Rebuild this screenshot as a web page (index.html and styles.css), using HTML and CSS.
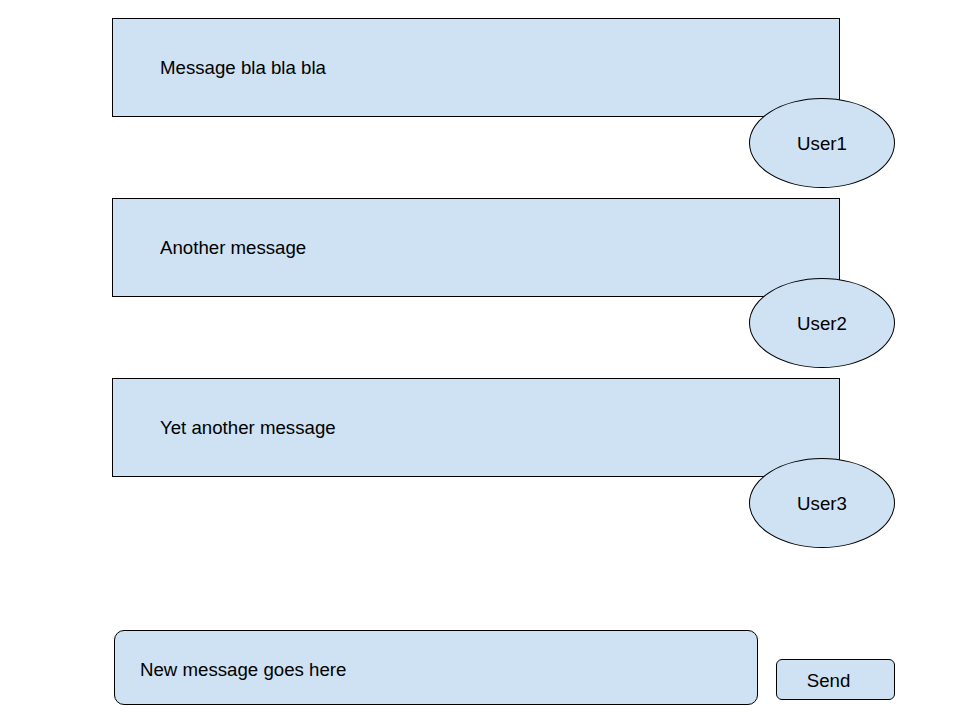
FILE: index.html
```html
<!DOCTYPE html>
<html lang="en">
<head>
    <meta charset="UTF-8" />
    <title>Chat</title>
    <link rel="stylesheet" href="styles.css">
</head>
<body>
    <div class="chat">
        <div class="message-list">
            <div class="message">
                <div class="message-text">Message bla bla bla</div>
                <div class="message-user">User1</div>
            </div>
            <div class="message">
                <div class="message-text">Another message</div>
                <div class="message-user">User2</div>
            </div>
            <div class="message">
                <div class="message-text">Yet another message</div>
                <div class="message-user">User3</div>
            </div>
        </div>

        <div class="composer">
            <div class="composer-input">New message goes here</div>
            <button class="send-button">Send</button>
        </div>
    </div>
</body>
</html>
```
FILE: styles.css
```css
/* General Reset */
* {
    box-sizing: border-box;
    margin: 0;
    padding: 0;
}

body {
    background-color: #fff;
    color: #000;
    font-family: 'Liberation Sans', Arial, sans-serif;
    font-size: 18.67px;
}

.chat {
    width: 960px;
    padding: 18px 0 0 112px;
}

/* Message list */
.message-list {
    display: flex;
    flex-direction: column;
    gap: 10px;
    width: 783px;
}

.message {
    display: flex;
    flex-direction: column;
}

.message-text {
    width: 728px;
    height: 99px;
    padding: 0 0 0 47px;
    display: flex;
    align-items: center;
    background-color: #cfe2f3;
    border: 1px solid #000;
}

.message-user {
    align-self: flex-end;
    width: 146px;
    height: 90px;
    margin-top: -19px;
    padding-top: 1px;
    display: flex;
    align-items: center;
    justify-content: center;
    background-color: #cfe2f3;
    border: 1px solid #000;
    border-radius: 50%;
    position: relative;
}

/* Composer */
.composer {
    display: flex;
    align-items: flex-end;
    gap: 18px;
    margin: 82px 0 0 2px;
}

.composer-input {
    width: 644px;
    height: 75px;
    padding: 4px 0 0 25px;
    display: flex;
    align-items: center;
    background-color: #cfe2f3;
    border: 1px solid #000;
    border-radius: 10px;
}

.send-button {
    width: 119px;
    height: 41px;
    margin-bottom: 5px;
    padding: 2px 14px 0 0;
    background-color: #cfe2f3;
    border: 1px solid #000;
    border-radius: 6px;
    font-family: inherit;
    font-size: 18.67px;
    color: #000;
}
```
